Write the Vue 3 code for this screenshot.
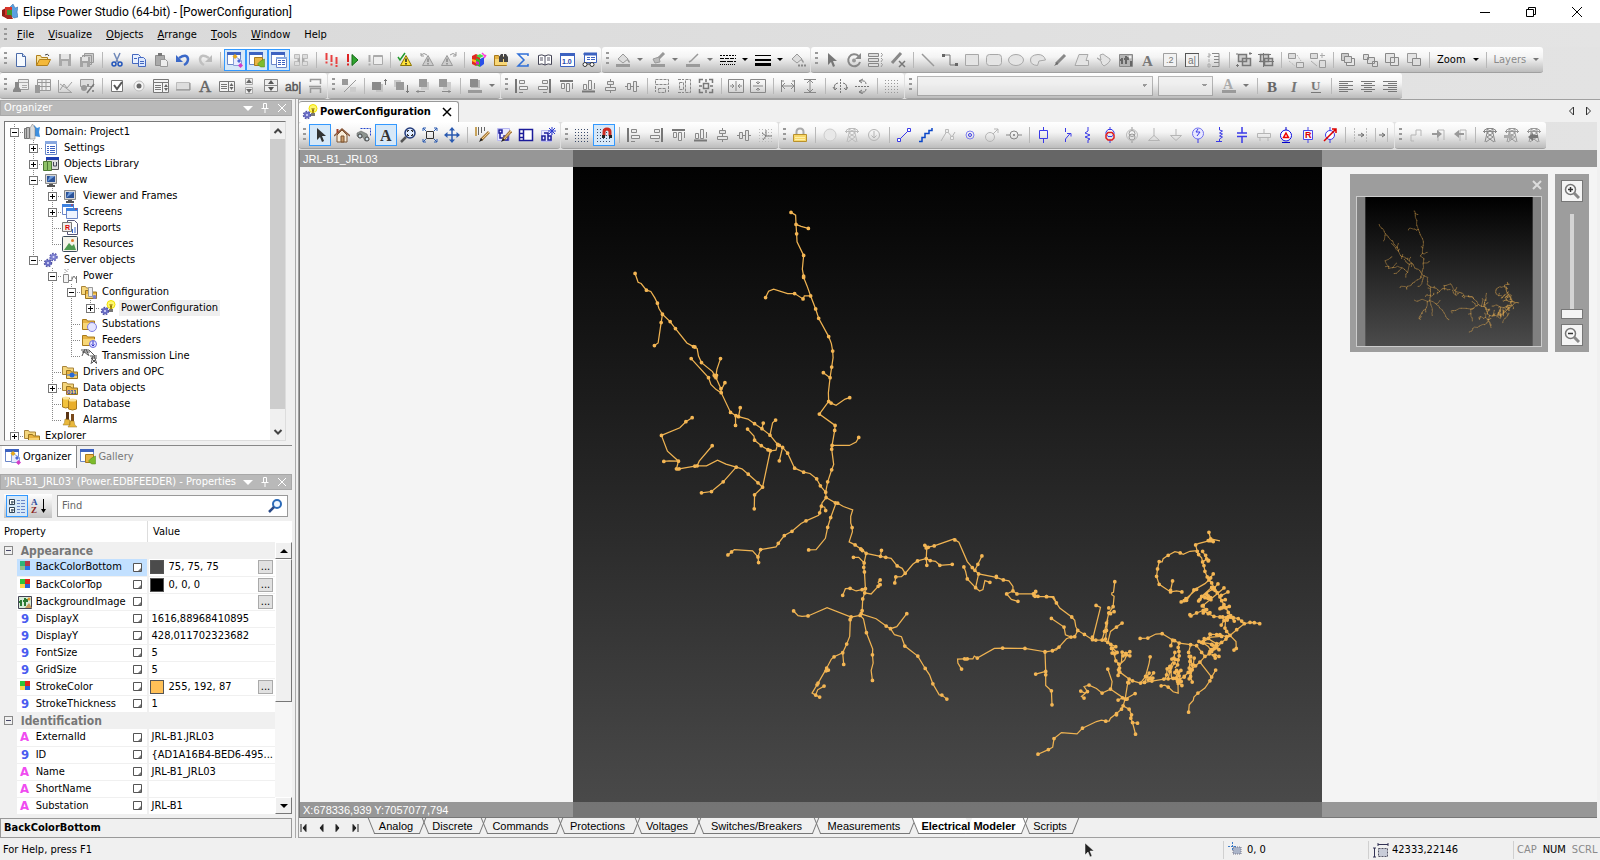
<script setup>
import { ref } from 'vue'

// 16x16 icon bodies, rendered inside <svg viewBox="0 0 16 16">
const G = 'stroke="#888" fill="none"'
const B = 'stroke="#3a3ae8" fill="none"'
const L = 'stroke="#b5b5b5" fill="none"'
const folder = '<path d="M1.500 13.500v-10h4l1 1.500h7v8.500z" fill="#e8b544" stroke="#a87a1c"/><path d="M2 7h12v6H2z" fill="#f8d777"/>'
const folders = '<path d="M.5 10.500v-8h4l1 1.500h6v6.500z" fill="#f5d67c" stroke="#a8843c"/><path d="M4.500 14.500v-8h4l1 1.500h6v6.500z" fill="#e9b23e" stroke="#9a7420"/><path d="M5 10h10v4H5z" fill="#f7d271"/>'
const win = '<path d="M.5.500h13v12H.5z" fill="#fff" stroke="#6a86c8"/><path d="M0 0h14v3H0z" fill="#3d62c0"/>'
const tower = (c) => `<path d="M2 3.500l3-2h6l3 2M1 4.500h14M2.500 3v3M13.500 3v3M5 2l6 4-6 4 7 5M11 2L5 6l6 4-7 5M5 2v4l-2 9M11 2v4l2 9" stroke="${c}" fill="none"/>`
const align = {
  left: '<path d="M2 1v14" stroke="#777" stroke-width="2"/><path d="M5.500 2.500h5v3h-5zM5.500 8.500h8v3h-8zM5 14.500h4" stroke="#888" fill="#eee"/>',
  right: '<path d="M14 1v14" stroke="#777" stroke-width="2"/><path d="M6.500 2.500h5v3h-5zM2.500 8.500h9v3h-9zM7 14.500h4" stroke="#888" fill="#eee"/>',
  top: '<path d="M2 3h13" stroke="#777" stroke-width="2"/><path d="M3.500 5.500h3v5h-3zM8.500 5.500h3v8h-3zM14.500 5v6" stroke="#888" fill="#eee"/>',
  bottom: '<path d="M2 13.500h13" stroke="#777" stroke-width="2"/><path d="M3.500 6.500h3v5h-3zM8.500 2.500h3v9h-3zM14.500 5v6" stroke="#888" fill="#eee"/>',
  centerh: '<path d="M8.500 1v14" stroke="#888"/><path d="M5.500 3.500h6v3h-6zM3.500 9.500h10v3h-10z" stroke="#888" fill="#e4e4e4"/>',
  centerv: '<path d="M1 8.500h14" stroke="#888"/><path d="M3.500 5.500h3v6h-3zM9.500 3.500h3v10h-3z" stroke="#888" fill="#e4e4e4"/>'
}
const dots = (c) => {
  let d = ''
  for (let y = 2; y < 16; y += 3) for (let x = 1; x < 16; x += 3) d += `M${x} ${y}.500h1`
  return `<path d="${d}" stroke="${c}"/>`
}
const gears = '<circle cx="10.500" cy="5" r="3" fill="#7c80cf" stroke="#5a5cb0" stroke-width="2.500" stroke-dasharray="1.500 1"/><circle cx="5" cy="11" r="3" fill="#7c80cf" stroke="#4f52a4" stroke-width="2.500" stroke-dasharray="1.500 1"/><circle cx="5" cy="11" r="3" fill="#6a6ec4"/><circle cx="10.500" cy="5" r="3" fill="#7c80cf"/><circle cx="5" cy="11" r="1" fill="#dfe0ff"/><circle cx="10.500" cy="5" r="1" fill="#dfe0ff"/>'
const warn = (f, s) => `<path d="M9 3.500l5.500 10h-11z" fill="${f}" stroke="${s}"/><path d="M9 6.500v3.500M9 11v1.500" stroke="${s === '#999' ? '#888' : '#222'}" stroke-width="1.500"/>`
const stack = (a, b) => `<path d="M1.500 1.500h7v7h-7z" fill="${a}" stroke="#888"/><path d="M6.500 6.500h8v7h-8z" fill="${b}" stroke="#888"/>`

const icons = {
  app: '<path d="M11 0l2 4 3-1-1 5 1 5-4 1-4-3V3z" fill="#5aa0e0" stroke="#2b62a0" stroke-width=".5"/><path d="M0 6l4-2v10l-4-2z" fill="#8c1d14"/><path d="M3 3h7v9H3z" fill="#d8362a"/><path d="M5 6h5v8H5z" fill="#3f9a32"/><path d="M1 11l4 4h6l-2-4z" fill="#a62a1e"/>',
  new: '<path d="M3.500 1.500h6l3 3v10h-9z" fill="#f6faff" stroke="#4a6aa8"/><path d="M9.500 1.500v3h3" fill="#cfe0f8" stroke="#4a6aa8"/>',
  open: '<path d="M1.500 13.500v-10h4l1 2h6v2" fill="#f8e29c" stroke="#b07f1c"/><path d="M1.500 13.500l3-6h11l-3 6z" fill="#f3b83a" stroke="#b07f1c"/><path d="M10 3q3-2 4 1" stroke="#444" fill="none"/>',
  save: '<path d="M2 2h12v12H2z" fill="#a9a9a9"/><path d="M4 2h8v5H4z" fill="#e6e6e6"/><path d="M5 9h6v5H5z" fill="#d0d0d0"/>',
  saveall: '<path d="M5.500 1.500h9v9h-9zM3.500 3.500h9v9h-9z" fill="#ccc" stroke="#999"/><path d="M1 5h10v10H1z" fill="#a4a4a4"/><path d="M3 5h6v4H3z" fill="#e4e4e4"/><path d="M4 11h4v4H4z" fill="#ccc"/>',
  cut: '<path d="M5 1l4 9M11 1L7 10" stroke="#6f88b8" stroke-width="1.500"/><circle cx="5" cy="12" r="2" fill="none" stroke="#2255bb" stroke-width="1.500"/><circle cx="11" cy="12" r="2" fill="none" stroke="#2255bb" stroke-width="1.500"/>',
  copy: '<path d="M1.500 2.500h6l2 2v7h-8z" fill="#e8f0ff" stroke="#4468c0"/><path d="M7.500 5.500h5l2 2v7h-7z" fill="#dce8ff" stroke="#4468c0"/><path d="M9 9.500h4M9 11.500h4M3 6.500h3" stroke="#4468c0"/>',
  paste: '<path d="M2.500 3.500h9v10h-9z" fill="#aaa" stroke="#8d8d8d"/><path d="M5 1h4v3H5z" fill="#777"/><path d="M7.500 7.500h5l2 2v5h-7z" fill="#eee" stroke="#999"/>',
  undo: '<path d="M4 6q8-5 9 1 0 4-4 6" fill="none" stroke="#3a68c8" stroke-width="2.500"/><path d="M1 3v7h7z" fill="#3a68c8"/>',
  redo: '<path d="M12 6Q4 1 3 7q0 4 4 6" fill="none" stroke="#c0c0c0" stroke-width="2.500"/><path d="M15 3v7H8z" fill="#bbb"/>',
  organizer: win + '<path d="M6.500 3.500v10h8v-5z" fill="#e8ecff" stroke="#8aa0d8"/><path d="M8 2l2.500 2.500L8 7 5.500 4.500z" fill="#e8a91c"/><path d="M12 7l2 2-2 2-2-2z" fill="#4a68d8"/><path d="M13.500 11l2.500 2.500-2.500 2.500-2.500-2.500z" fill="#d43cc8"/>',
  gallery: win + '<path d="M5.500 5.500h8v8h-8z" fill="#e8b544" stroke="#a87a1c"/><path d="M15.500 7v8h-4l-3-3 3-3z" fill="#7dbb2c" stroke="#4e8414" stroke-width=".5"/>',
  props: win + '<path d="M5.500 5.500h10v10h-10z" fill="#fff" stroke="#6a86c8"/><path d="M5 5h11v2H5z" fill="#88a8e0"/><path d="M7 8.500h3M11 8.500h3M7 10.500h3M11 10.500h3M7 12.500h3M11 12.500h3" stroke="#3d62c0"/>',
  swap: '<path d="M1.500 2.500h5v4h-5zM9.500 2.500h5v4h-5zM1.500 9.500h5v4h-5zM9.500 9.500h5v4h-5z" stroke="#bbb" fill="#ddd"/><path d="M7 5L4 8l3 3zM9 5l3 3-3 3z" fill="#aaa"/>',
  run: '<path d="M3.500 1v7M8.500 3v7M13.500 5v7" stroke="#e84040" stroke-width="2"/><path d="M3.500 9.500v2M8.500 11.500v2M13.500 13v2" stroke="#e84040" stroke-width="2"/>',
  play: '<path d="M3 2v8M3 11.500v2" stroke="#d22" stroke-width="2"/><path d="M7 2.500v11l6-5.500z" fill="#2fa52f" stroke="#156a15"/>',
  stop: '<path d="M2.500 3v7M2.500 11.500v2" stroke="#aaa" stroke-width="2"/><path d="M6.500 3.500h9v9h-9z" stroke="#aaa" fill="#eee"/><path d="M6 4.500h10" stroke="#aaa"/>',
  warn: '<path d="M1 5l2 3 5-7" stroke="#1f9a2a" stroke-width="1.500" fill="none"/>' + warn('#ffe23a', '#8a7400'),
  warnprev: '<path d="M2 3q3-3 6 0M2 1v3h3" stroke="#999" fill="none"/>' + warn('#ccc', '#999'),
  warnnext: '<path d="M9 3q3-3 6 0M15 0v4h-3" stroke="#999" fill="none"/><g transform="translate(-3 0)">' + warn('#ccc', '#999') + '</g>',
  cube: '<path d="M1 4l4-2 4 2v8l-4 2-4-2z" fill="#e02a20"/><path d="M5 6l4 2v7l-4-2z" fill="#2fb52f"/><path d="M9 7l4-2v7l-4 3z" fill="#2a50e8"/><path d="M1 7l4 1v3L1 9z" fill="#ffb81c"/><path d="M5 9l3 1v3l-3-1z" fill="#d81cc8"/><path d="M5 4l4-2 4 2-4 2z" fill="#48e048"/><path d="M11 1l3 3M13 6l2-3" stroke="#ff40d8" stroke-width="1.500"/>',
  find: folder + '<path d="M6 5l2-3h2v3h1V2h2l2 3v5h-4V7h-1v3H6z" fill="#444"/>',
  sigma: '<path d="M13 4V2H3l6 6-6 6h10v-2" fill="none" stroke="#2f6fd8" stroke-width="1.500"/>',
  book: '<path d="M8 4Q5 2 1.500 3.500v9Q5 11 8 13q3-2 6.500-.5v-9Q11 2 8 4z" fill="#fff" stroke="#445"/><path d="M8 4v9M3 6h3M3 8h3M10 6h3M10 8h3" stroke="#556"/>',
  number: '<path d="M1.500 1.500h14v13h-14z" fill="#fff" stroke="#3d62c0"/><path d="M1 1h15v3H1z" fill="#3d62c0"/><text x="3" y="12" font-size="7" font-weight="bold" font-family="Liberation Sans" fill="#2244aa">1.0</text>',
  report: '<path d="M3.500 1.500h12v9h-12z" fill="#fff" stroke="#3d62c0"/><path d="M3 1h13v2H3zM6 5.500h3M10 5.500h4M6 7.500h3M10 7.500h4" stroke="#3d62c0" fill="#3d62c0"/><circle cx="4" cy="12.500" r="2" fill="#fff" stroke="#333"/><circle cx="11" cy="12.500" r="2" fill="#fff" stroke="#333"/><path d="M6 12h3" stroke="#333"/>',
  fill: '<path d="M3 7l5-5 5 5-5 4z" fill="#ddd" stroke="#999"/><path d="M13 7q3 3 1 4l-2-3" fill="#999"/><path d="M1 12h14v3H1z" fill="#9a9a9a"/>',
  brush: '<path d="M14 1L8 7" stroke="#999" stroke-width="3"/><path d="M9 5L3 7l2 4 5-1z" fill="#bbb" stroke="#999"/><path d="M1 12h14v3H1z" fill="#9a9a9a"/>',
  pen: '<path d="M13 2L6 9l-2 1" stroke="#999" stroke-width="1.500" fill="none"/><path d="M1 12h14v3H1z" fill="#9a9a9a"/>',
  dashes: '<path d="M0 3.500h16" stroke="#000" stroke-dasharray="2 1"/><path d="M0 6.500h16" stroke="#000" stroke-dasharray="4 1"/><path d="M0 9.500h16" stroke="#000" stroke-dasharray="6 1"/><path d="M0 12.500h16" stroke="#000" stroke-dasharray="1 1"/>',
  weight: '<path d="M0 3.500h16" stroke="#000"/><path d="M0 8h16" stroke="#000" stroke-width="2"/><path d="M0 12.500h16" stroke="#000" stroke-width="3"/>',
  bucket: '<path d="M2 7l5-5 5 5-5 4z" fill="#ddd" stroke="#999"/><path d="M12 7q3 3 1 4l-2-3" fill="#999"/><path d="M8 13.500h2M11 13.500h2M14 13.500h2" stroke="#888" stroke-width="2"/>',
  select: '<path d="M4 1v12l3-3 2 5 2-1-2-5h4z" fill="#777"/>',
  rotate: '<path d="M12.500 4A6 6 0 1 0 14 10" fill="none" stroke="#888" stroke-width="2"/><path d="M15 1v6H9z" fill="#888"/><circle cx="8" cy="8.500" r="2" fill="#999"/>',
  list: '<path d="M.5 1.500h10v3H.5zM.5 6.500h10v3H.5zM.5 11.500h10v3H.5z" fill="#ddd" stroke="#888"/><path d="M13 1q3 1 0 4M13 6q3 1 0 4M13 11q3 1 0 4" stroke="#999" fill="none"/>',
  pencut: '<path d="M11 1L2 11" stroke="#888" stroke-width="3"/><path d="M9 9l6 6M15 9l-6 6" stroke="#777" stroke-width="1.500"/>',
  line: '<path d="M2 2l12 12" stroke="#999" stroke-width="1.500"/>',
  connector: '<path d="M2 3h6v10h6" fill="none" stroke="#777"/><path d="M0 2h3v3H0zM13 11h3v3h-3z" fill="#666"/>',
  rect: '<path d="M1.500 2.500h13v11h-13z" fill="#e4e4e4" stroke="#a8a8a8"/>',
  rrect: '<rect x=".5" y="2.500" width="15" height="11" rx="3" fill="#e4e4e4" stroke="#a8a8a8"/>',
  ellipse: '<ellipse cx="8" cy="8" rx="7.500" ry="5.500" fill="#e4e4e4" stroke="#a8a8a8"/>',
  chord: '<path d="M15.500 8Q14 2.500 8 2.500.5 3 .5 8t7 5.500L9 9z" fill="#e4e4e4" stroke="#a8a8a8"/>',
  pencil: '<path d="M13 3L4 12" stroke="#888" stroke-width="3"/><path d="M5 10l-3 4 4-2z" fill="#666"/>',
  poly: '<path d="M5 2.500h9l-2 6h2.500v5H1z" fill="#e4e4e4" stroke="#a8a8a8"/>',
  freeform: '<path d="M1 6l4 2-1-5 3-1 7 5q1 3-6 7-3-2-3-5z" fill="#e4e4e4" stroke="#a8a8a8"/>',
  image: '<path d="M1.500 2.500h13v12h-13z" fill="#b4b4b4" stroke="#888"/><path d="M4 12V6M2 8h3M8 12V4M6 7h4V5M13 14V9" stroke="#666" stroke-width="2"/><circle cx="12" cy="5" r="1.500" fill="#eee"/>',
  text: '<text x="2" y="14" font-size="15" font-weight="bold" font-family="Liberation Serif" fill="#777">A</text>',
  label: '<path d="M1.500 1.500h13v13h-13z" fill="#f2f2f2" stroke="#a0a0a0"/><text x="4" y="11" font-size="9" font-family="Liberation Sans" fill="#777">.2</text>',
  edit: '<path d="M1.500 1.500h13v13h-13z" fill="#f2f2f2" stroke="#888"/><path d="M1 1.500h14M1.500 1v14" stroke="#555"/><text x="4" y="12" font-size="10" font-family="Liberation Sans" fill="#777">a|</text>',
  ruler: '<path d="M6 1.500h7v13H6M8 4.500h5M8 7.500h5M8 10.500h5" stroke="#888" fill="none"/><path d="M2 2h2v2H2v1h2M3 7v3M2 12h2v3H2z" stroke="#aaa" fill="none"/>',
  group: '<path d="M2.500 2.500h8v7h-8zM6.500 6.500h8v7h-8z" stroke="#777" fill="#ccc" stroke-width="1.500"/><path d="M0 2h2M14 0v3M13 1.500h3M1.500 12v3M0 13.500h3" stroke="#777"/>',
  ungroup: '<path d="M2.500 2.500h8v7h-8zM6.500 6.500h8v7h-8z" stroke="#777" fill="#ccc" stroke-width="1.500"/><path d="M0 2.500h13M5.500 1v14M1 9.500h15" stroke="#777" fill="none"/>',
  arrowlink: '<path d="M.5 1.500h7v5h-7zM8.500 10.500h7v5h-7z" stroke="#999" fill="#ddd"/><path d="M9 3l4 6M1 9l6 5" stroke="#aaa" stroke-dasharray="1 1"/>',
  arrowadd: '<path d="M.5 1.500h7v5h-7zM9.500 8.500h6v7h-6z" stroke="#999" fill="#ddd"/><path d="M12 1v5M10 3.500h5M1 9l6 5" stroke="#aaa"/>',
  tofront: stack('#ccc', '#e6e6e6') + '<path d="M4.500 4.500h7v6h-7z" stroke="#888" fill="#ddd"/>',
  toback: '<path d="M1.500 2.500h5v5h-5zM10.500 9.500h5v5h-5zM5.500 5.500h7v6h-7z" stroke="#888" fill="#ddd"/>',
  forward: '<path d="M6.500 5.500h8v8h-8zM1.500 1.500h9v9h-9z" stroke="#888" fill="#e4e4e4"/>',
  backward: '<path d="M1.500 1.500h9v9h-9z" stroke="#999" fill="#e4e4e4"/><path d="M6.500 6.500h8v7h-8z" stroke="#888" fill="#ddd"/>',
  user: '<path d="M5.500 1.500h10v10h-10z" fill="#eee" stroke="#999"/><path d="M6 4.500h9M9 7.500h5M9 9.500h5" stroke="#aaa"/><path d="M2 4h4v5l2 3v2H0v-2l2-3z" fill="#888"/>',
  table: '<path d="M2.500 1.500h13v11h-13z" fill="#eee" stroke="#999"/><path d="M2 4.500h13M2 8.500h13M7 2v11M11 2v11" stroke="#999"/><path d="M0 7h5v8H0z" fill="#999"/>',
  chart: '<path d="M1.500 2v12.500H15M3 12l4-6 3 4 5-6M3 6l6 4 5 4" fill="none" stroke="#a0a0a0"/>',
  percent: '<path d="M1.500 1.500h13v7h-13z" fill="#ddd" stroke="#999"/><circle cx="5" cy="10" r="3" fill="#999"/><path d="M15 6L8 15M8 7h2M13 13h2" stroke="#777" stroke-width="1.500"/>',
  check: '<path d="M2.500 2.500h11v11h-11z" fill="#fff" stroke="#777"/><path d="M5 7l3 4 5-7" fill="none" stroke="#555" stroke-width="2"/>',
  radio: '<circle cx="8" cy="8" r="5" fill="#f4f4f4" stroke="#bbb"/><circle cx="8" cy="8" r="2.500" fill="#666"/>',
  combo: '<path d="M.5 1.500h15v3H.5zM.5 4.500h9v10h-9zM9.500 4.500h6v10h-6zM2 7.500h6M2 9.500h6M2 11.500h6" fill="#f4f4f4" stroke="#777"/><path d="M11 9l2-3 2 3zM11 10l2 3 2-3z" fill="#666"/>',
  button: '<path d="M1.500 4.500h13v7h-13z" fill="#ddd" stroke="#bbb"/><path d="M1 12h14V5" fill="none" stroke="#888"/>',
  bigA: '<text x="2" y="14" font-size="17" font-family="Liberation Serif" fill="#666" stroke="#666" stroke-width=".5">A</text>',
  listbox: '<path d="M.5 3.500h15v10H.5zM9.500 3v11M2 6.500h6M2 8.500h6M2 10.500h6" fill="#f4f4f4" stroke="#777"/><path d="M10.500 8l2-3 2 3zM10.500 9l2 3 2-3z" fill="#666"/>',
  spin: '<path d="M4.500.5h7v6h-7zM4.500 9.500h7v6h-7z" fill="#eee" stroke="#aaa"/><path d="M5 5l3-4 3 4zM5 11l3 4 3-4z" fill="#666"/>',
  updown: '<path d="M1.500 1.500h13v12h-13zM2 7.500h12" fill="#eee" stroke="#888"/><path d="M5 6l3-4 3 4zM5 9l3 4 3-4z" fill="#555"/>',
  abl: '<text x="0" y="13" font-size="12" font-family="Liberation Sans" fill="#555" stroke="#555" stroke-width=".4">ab|</text>',
  splith: '<path d="M3.500 4V1.500h10V6M2 8.500h12M3.500 15v-4.500h10V15" fill="none" stroke="#999" stroke-width="1.500"/>',
  nolink: '<path d="M1 1h6v6H1z" fill="#999"/><path d="M9 9h6v5H9z" fill="#ccc"/><path d="M15 2L3 14" stroke="#999"/>',
  bring: '<path d="M5 6h7v8H5z" fill="#c4c4c4"/><path d="M1 4h9v8H1z" fill="#8a8a8a"/><path d="M14.500 1v6M13 2.500h3" stroke="#777"/>',
  send: '<path d="M1 2h7v7H1z" fill="#ccc"/><path d="M3 4h8v8H3z" fill="#999"/><path d="M14.500 7v8M13 13.500h3" stroke="#777"/>',
  goback: '<path d="M6 4h8v8H6z" fill="#ccc"/><path d="M4 1h8v8H4z" fill="#999"/><path d="M1 13.500h9M3 12v3" stroke="#888"/>',
  gofwd: '<path d="M6 4h8v8H6z" fill="#ccc"/><path d="M2 1h8v8H2z" fill="#999"/><path d="M5 13.500h9M12 12v3" stroke="#888"/>',
  shade: '<path d="M4 2h9v8H4z" fill="#bbb"/><path d="M3 1h8v8H3z" fill="#8c8c8c"/><path d="M1 12h14v3H1z" fill="#9a9a9a"/>',
  al: align.left, ar: align.right, at: align.top, ab: align.bottom, ach: align.centerh, acv: align.centerv,
  samew: `<path d="M1.500 1.500h13v5h-13zM4.500 10.500h7v4h-7zM1.500 8v6M14.500 8v6" ${G} stroke-dasharray="3 1"/>`,
  sameh: `<path d="M9.500 1.500h5v13h-5zM3.500 4.500h4v7h-4zM2 1.500h6M2 14.500h6" ${G} stroke-dasharray="3 1"/>`,
  samesize: '<path d="M1.500 5v-3.500H5M11 1.500h3.500V5M14.500 11v3.500H11M5 14.500H1.500V11M5.500 5.500h5v5h-5zM8 1v3M8 12v3M1 8h3M12 8h3" stroke="#777" fill="none" stroke-width="1.500"/>',
  hcenter: `<path d="M.5 1.500h15v13H.5zM8 3v10M2 8h4M14 8h-4M4 6l2 2-2 2M12 6l-2 2 2 2" ${G}/>`,
  vcenter: `<path d="M.5 1.500h15v13H.5zM3 8h10M8 3v3M8 13v-3M6 4l2 2 2-2M6 12l2-2 2 2" ${G}/>`,
  spaceh: `<path d="M1.500 2v12M14.500 2v12M2 8h12M5 5L2 8l3 3M11 5l3 3-3 3M1 3h3M12 3h3" ${G}/>`,
  spacev: `<path d="M2 1.500h12M2 14.500h12M8 2v12M5 5l3-3 3 3M5 11l3 3 3-3" ${G}/>`,
  fliph: '<path d="M8.500 1v15" stroke="#777" stroke-dasharray="2 1"/><path d="M3 11q-2-5 3-6M14 11q2-5-3-6M1 9l2 3 2-2M16 9l-2 3-2-2" fill="none" stroke="#777"/>',
  flipv: '<path d="M1 8.500h15" stroke="#777" stroke-dasharray="2 1"/><path d="M6 3q6-1 6 3M6 14q6 1 6-3M9 1L5 3l3 2M9 16l-4-2 3-2" fill="none" stroke="#777"/>',
  grid: dots('#999'),
  fontcolor: '<text x="2" y="11" font-size="14" font-family="Liberation Serif" font-weight="bold" fill="#aaa">A</text><path d="M1 12h14v3H1z" fill="#9a9a9a"/>',
  bold: '<text x="3" y="14" font-size="15" font-weight="bold" font-family="Liberation Serif" fill="#666">B</text>',
  italic: '<text x="5" y="14" font-size="15" font-style="italic" font-weight="bold" font-family="Liberation Serif" fill="#777">I</text>',
  underline: '<text x="3" y="12" font-size="13" font-weight="bold" font-family="Liberation Serif" fill="#777">U</text><path d="M3 14.500h10" stroke="#777"/>',
  tleft: '<path d="M1 3.500h14M1 5.500h9M1 7.500h14M1 9.500h9M1 11.500h14M1 13.500h9" stroke="#777"/>',
  tcenter: '<path d="M1 3.500h14M4 5.500h8M1 7.500h14M4 9.500h8M1 11.500h14M4 13.500h8" stroke="#777"/>',
  tright: '<path d="M1 3.500h14M6 5.500h9M1 7.500h14M6 9.500h9M1 11.500h14M6 13.500h9" stroke="#777"/>',
  cursor: '<path d="M5 1v12l3-3 2 5 2-1-2-5h4z" fill="#333"/>',
  home: '<path d="M3 8v7h10V8L8 3z" fill="#f8ecd8" stroke="#7a5230"/><path d="M0 9l8-7 8 7" fill="none" stroke="#8a5a3c" stroke-width="1.500"/><path d="M7 9h3v6H7z" fill="#c89a68" stroke="#7a5230"/><path d="M3.500 2v4" stroke="#a04028" stroke-width="2"/>',
  binoc: '<path d="M4.500 1.500h10v8" stroke="#2244cc" fill="none" stroke-dasharray="2 1"/><path d="M1 6l4-2 6 3 2 6-4 1-2-4-3 1-3-2z" fill="#8c9490" stroke="#555" stroke-width=".5"/><circle cx="11" cy="12" r="2" fill="#cfe0e8" stroke="#444"/><circle cx="4" cy="9" r="2" fill="#cfe0e8" stroke="#444"/>',
  textA: '<text x="2" y="14" font-size="16" font-weight="bold" font-family="Liberation Serif" fill="#333">A</text>',
  zoomwin: '<path d="M6 10l-5 5" stroke="#555" stroke-width="2.500"/><circle cx="10" cy="6" r="5" fill="#e0ecff" stroke="#223a7a" stroke-width="1.500"/><path d="M7.500 5v-1.500H9M11 3.500h1.500V5M12.500 7v1.500H11M9 8.500H7.500V7" fill="none" stroke="#222"/>',
  fit: '<path d="M4.500 4.500h7v7h-7z" fill="none" stroke="#333"/><path d="M1 1l3 3M15 1l-3 3M1 15l3-3M15 15l-3-3M1 4V1h3M12 1h3v3M1 12v3h3M12 15h3v-3" stroke="#2a5ab0" fill="none"/>',
  pan: '<path d="M8 1v14M1 8h14" stroke="#2a5ab0" stroke-width="1.500"/><path d="M8 0l3 3.500H5zM8 16l3-3.500H5zM0 8l3.500-3v6zM16 8l-3.500-3v6z" fill="#2a5ab0"/>',
  barpen: '<path d="M2 0v9" stroke="#c8a45c" stroke-width="2"/><path d="M4.500 0v8M7.500 0v6M10.500 0v4" stroke="#666"/><path d="M15 5l-8 8" stroke="#a87a3c" stroke-width="3"/><path d="M15 5l-8 8" stroke="#f0d08c"/><path d="M7 11l-2 4 4-2z" fill="#222"/>',
  nodepen: '<path d="M1.500 1.500h12v12h-12z" fill="#e8e8ff" stroke="#b8b8f0"/><path d="M3 3h3v3H3zM8 9h4v4H8zM4 6v5h4" fill="none" stroke="#1c1c9a" stroke-width="1.500"/><path d="M15 4l-8 9" stroke="#a87a3c" stroke-width="3"/><path d="M15 4l-8 9" stroke="#f0d08c"/><path d="M7 11l-2 4 4-2z" fill="#222"/>',
  layout: '<path d="M1.500 2.500h13v11h-13zM5.500 2v11M1 6.500h4M1 10.500h4" fill="#fff" stroke="#1c1c9a" stroke-width="1.500"/>',
  nodestar: '<path d="M1.500 3.500h10v11h-10z" fill="#e8e8ff" stroke="#b8b8f0"/><path d="M2 9h3v4H2zM8 9h3v4H8zM4 6h4v3" fill="none" stroke="#1c1c9a" stroke-width="1.500"/><path d="M12 0v8M8 4h8M9 1l6 6M15 1L9 7" stroke="#2a3ad0"/>',
  snapgrid: dots('#3a4a6a'),
  magnet: dots('#3a4a6a') + '<path d="M8 9V5q0-3 3-3t3 3v4" stroke="#cc2a20" stroke-width="3" fill="none"/><path d="M6 8h3v3H6zM13 8h3v3h-3z" fill="#222"/>',
  snap: dots('#bbb') + '<path d="M8 3v6h6M4 6l4 3-3 4" stroke="#777" fill="none"/>',
  lock: '<path d="M4.500 8V5q0-3.500 3.500-3.500T11.500 5v3" stroke="#aaa" stroke-width="2" fill="none"/><path d="M1.500 7.500h13v7h-13z" fill="#f8d86a" stroke="#b8902c"/><path d="M3 10.500h10M3 12.500h10" stroke="#fff0a8"/>',
  circ: '<circle cx="8" cy="8" r="6" fill="#e8e8e8" stroke="#ccc"/>',
  tower: tower('#bbb'),
  towerdark: tower('#888'),
  circdown: `<circle cx="8" cy="8" r="5.500" ${L}/><path d="M8 4v7M5.500 8.500L8 11l2.500-2.500" ${L}/>`,
  seg: `<path d="M4 12l8-8" ${B}/><path d="M1.500 11.500h3v3h-3zM11.500 1.500h3v3h-3z" fill="#fff" stroke="#3a3ae8"/>`,
  steps: '<path d="M1 14.500h3v-4h3v-4h4v-3h3V1" fill="none" stroke="#0a46c8" stroke-width="1.500"/>',
  zig: `<path d="M1 14l6-10 5 6 3-5" ${L}/><path d="M5.500 2.500h3v3h-3zM10.500 9.500h3v3h-3z" fill="#eee" stroke="#bbb"/>`,
  target: '<circle cx="8" cy="8" r="4" fill="none" stroke="#8080ee"/><circle cx="8" cy="8" r="1.500" fill="none" stroke="#3a3ae8"/>',
  male: `<circle cx="6" cy="10" r="4.500" ${L}/><path d="M9 7l5-5M10 2h4v4" ${L}/>`,
  sw: '<circle cx="8" cy="8" r="4" fill="none" stroke="#888"/><circle cx="8" cy="8" r="1" fill="#777"/><path d="M0 8h4M12 8h4" stroke="#888"/>',
  breaker: `<path d="M7.500 0v3M7.500 12v4M3.500 3.500h8v8h-8z" ${B}/>`,
  knife: `<path d="M7.500 1v4M7.500 15v-3l5-6M9 6.500h4v3" ${B}/>`,
  fuse: `<path d="M8 0v4l-3 2 5 2-5 2 5 2-2 1v3" ${B}/>`,
  xfmr: '<path d="M8 0v3M8 13v3" stroke="#3a3ae8"/><path d="M6 2.500h4l2 2.500v2l-2 2.500H6L4 7V5z" fill="none" stroke="#3a3ae8"/><path d="M6 5.500h4l2 2.500v3l-2 2H6l-2-2V8z" fill="none" stroke="#e01c1c" stroke-width="1.500"/>',
  xfmr2: '<path d="M8 0v3M8 13v3" stroke="#999"/><circle cx="8" cy="6.500" r="3" fill="none" stroke="#999"/><circle cx="8" cy="10" r="3" fill="none" stroke="#999"/><circle cx="8" cy="8" r="5.500" fill="none" stroke="#bbb"/>',
  up: `<path d="M8 1v8M2.500 13.500L8 8.500l5.500 5z" ${L}/>`,
  down: `<path d="M8 2v6M2.500 8.500h11L8 13.500z" ${L}/>`,
  gen: '<circle cx="8" cy="6.500" r="5.500" fill="#e8e8ff" stroke="#7070ee"/><path d="M8 12v4M8 2l-2 3h4l-3 4" stroke="#3a3ae8" fill="none"/>',
  reactor: `<path d="M7.500 0v3l3 1-3 2 3 1-3 2 3 1-3 2v2M4 14.500h6" ${B}/>`,
  cap: '<path d="M8 0v5.500M3 6h10M3 9.500h10M8 10v6" fill="none" stroke="#3a3ae8" stroke-width="1.500"/>',
  bus: `<path d="M1.500 6.500h13v4h-13zM8 2v4M4 11v3M12 11v3" ${L}/>`,
  delta: '<circle cx="8" cy="8.500" r="5.500" fill="#fff" stroke="#0a0ae0"/><path d="M8 0v3M4 15.500h8" stroke="#00c"/><path d="M8 6l2.500 4.500h-5z" fill="#fdd" stroke="#e00" stroke-width="1.500"/>',
  reg: '<path d="M8 0v3M8 13v3M3.500 3.500h9v9h-9z" fill="#f4f4ff" stroke="#4a4ae8"/><text x="5" y="11" font-size="9" font-weight="bold" font-family="Liberation Sans" fill="#d00">R</text>',
  vari: '<circle cx="8" cy="8" r="4.500" fill="#fff" stroke="#3a3ae8"/><path d="M8 0v3M8 13v3" stroke="#3a3ae8"/><path d="M2 14L14 2M10 2h4v4" fill="none" stroke="#d00" stroke-width="1.500"/>',
  outp: '<path d="M2.500 1v14M14.500 1v14" stroke="#bbb" stroke-dasharray="2 1"/><path d="M6 8h5M9 6l3 2-3 2" stroke="#666" fill="none"/>',
  inp: '<path d="M1.500 1v14M13.500 1v14" stroke="#bbb"/><path d="M5 8h5M8 6l3 2-3 2" stroke="#666" fill="none"/>',
  link0: `<path d="M3 14V8h5V3h5v6M3 14h3" ${L}/>`,
  link1: `<path d="M8 14V3h6v10" ${L}/><path d="M2 6h5V3l5 4-5 4V8H2z" fill="#999"/>`,
  link2: `<path d="M8 14V3h6v10" ${L}/><path d="M12 6H7V3L2 7l5 4V8h5z" fill="#999"/>`,
  towerin: tower('#999') + '<path d="M0 8h5V6l4 4-4 4v-3H0z" fill="#aaa"/>',
  towerout: tower('#999') + '<path d="M12 8H7V6l-5 4 5 4v-3h5z" fill="#777"/>',
  // tree
  domain: '<path d="M10 1l3 3 3-1-1 5 1 5-6-1z" fill="#3d8fe0"/><path d="M.5 4.500h2v10h-2zM2.500 3.500h3v11h-3z" fill="#bbb" stroke="#777"/><path d="M6 4l2.500-4L11 4v11H6z" fill="#ddd" stroke="#777" stroke-width=".5"/>',
  settings: '<path d="M2.500 1.500h11v13h-11z" fill="#fff" stroke="#6a8ac8"/><path d="M2 1h12v3H2z" fill="#88a8e0"/><path d="M4 6.500h2M7 6.500h5M4 8.500h2M7 8.500h5M4 10.500h2M7 10.500h5M4 12.500h2M7 12.500h5" stroke="#3d62c0"/>',
  library: '<path d="M3.500 1.500h12v12h-12z" fill="#ddd" stroke="#555"/><path d="M3 1h13v3H3z" fill="#1f3fb0"/><path d="M.5 5.500h4v9h-4zM4.500 5.500h4v9h-4z" fill="#8fc268" stroke="#4e7a34"/><path d="M10.500 6v4h3V6" stroke="#445" fill="none"/>',
  monitor: '<path d="M2.500 2.500h11v9h-11z" fill="#d8d8d8" stroke="#888"/><path d="M4 4h8v6H4z" fill="#2a5298"/><path d="M4 10l8-6H7z" fill="#6f9ad8"/><path d="M6 12h4v1h2v2H4v-2h2z" fill="#555"/>',
  screens: '<path d="M.5.500h11v10H.5z" fill="#fff" stroke="#6a86c8"/><path d="M0 0h12v3H0z" fill="#3d82e0"/><path d="M4.500 4.500h11v10h-11z" fill="#eef4ff" stroke="#6a86c8"/><path d="M4 4h12v3H4z" fill="#3d82e0"/><path d="M9 1h2M13 5h2" stroke="#d22"/>',
  reports: '<path d="M5.500.500h7l3 3v11h-10z" fill="#fff" stroke="#557"/><path d="M.5 2.500h9v9h-9z" fill="#eee" stroke="#777"/><text x="3" y="10" font-size="7" font-weight="bold" font-family="Liberation Sans" fill="#d00">R</text><path d="M10.500 13V9M13 13V7" stroke="#36c"/>',
  resources: '<rect x=".5" y=".5" width="15" height="15" rx="1" fill="#f4f4ea" stroke="#3a4a5a"/><path d="M2 14l5-7 3 3 2-2 2 6z" fill="#4e9a50"/><circle cx="10.500" cy="4.500" r="1.500" fill="#e07a2a"/>',
  gears,
  plant: '<path d="M1.500 14.500v-8h5v8z" fill="#f4f4f4" stroke="#888"/><path d="M3 1v1M5 3v1M3 4v1M6 1v1M4 2v1" stroke="#999"/><path d="M7 12.500h3v-4M10 11l2-3 2 3M14.500 8v7" stroke="#777" fill="none"/>',
  configfolder: folders + '<path d="M7.500 3.500h4v9h-4z" fill="#eee" stroke="#999"/><circle cx="13.500" cy="13" r="2" fill="#7c80cf"/>',
  powerconf: '<circle cx="5" cy="11" r="3" fill="#6a6ec4" stroke="#4f52a4" stroke-width="2.500" stroke-dasharray="1.500 1"/><circle cx="5" cy="11" r="3" fill="#6a6ec4"/><circle cx="5" cy="11" r="1" fill="#dfe0ff"/><circle cx="11" cy="4.500" r="4" fill="#fff870" stroke="#f0e000"/><path d="M10 4l1 5 1-5" stroke="#997a00" fill="none"/><path d="M9 9h4v3H9z" fill="#777"/>',
  subfolder: folder + '<circle cx="11" cy="11" r="4.500" fill="#e4e4ff" stroke="#8080e0"/>',
  feedfolder: folder + '<circle cx="12" cy="12" r="3.500" fill="#e4e4ff" stroke="#6a6ae0"/><path d="M12 9v5M10.500 12.500L12 14l1.500-1.500" stroke="#33c" fill="none"/>',
  line2: '<path d="M0 2h8M1 4h8M4 1L1 8M5 1l3 7M2 3l5 4M9 8h7M10 10h6M12 8l-2 8M13 8l3 8M10 10l5 5M15 11l-4 4M8 2l6 6" stroke="#555" fill="none"/>',
  driver: folders + '<circle cx="10" cy="11" r="2.500" fill="#2a6ad8"/><path d="M5 11h10" stroke="#2a6ad8"/>',
  data: folders + '<text x="5" y="14" font-size="6" font-weight="bold" font-family="Liberation Sans" fill="#1a3aa8">011</text>',
  database: '<path d="M.5 2v9q3 2 7 0V2z" fill="#f2c23c" stroke="#a87a1c"/><ellipse cx="4" cy="2" rx="3.500" ry="1.500" fill="#fbe398"/><path d="M6.500 4v9q4 2 8 0V4z" fill="#e9ae2a" stroke="#a87a1c"/><ellipse cx="10.500" cy="4" rx="4" ry="1.500" fill="#fbe398"/>',
  alarms: '<path d="M4 0h3v8H4z" fill="#5a3414"/><path d="M9 2h3v8H9z" fill="#7a4a1c"/><path d="M1 13q2-2 2-6l5 1v5zM6 15q2-2 2-6h4q0 4 3 6z" fill="#e9b83c" stroke="#9a7420" stroke-width=".5"/>',
  folders,
  // property types
  color: '<path d="M3 2h5v5H3z" fill="#2fc43a"/><path d="M8 2h5v5H8z" fill="#e0241c"/><path d="M3 7h5v4H3z" fill="#ffd84a"/><path d="M8 7h5v4H8z" fill="#2a62d8"/>',
  colorsel: '<path d="M3 2h5v5H3z" fill="#2fb47a"/><path d="M8 2h5v5H8z" fill="#b03a4a"/><path d="M3 7h5v4H3z" fill="#8fc08a"/><path d="M8 7h5v4H8z" fill="#2a72e8"/>',
  picture: '<path d="M1.500 2.500h13v12h-13z" fill="#d8ecd8" stroke="#445"/><path d="M4 12V6M2 8h3M8 12V4M6 7h4V5" stroke="#2c7a34" stroke-width="2"/><circle cx="12" cy="5" r="1.500" fill="#e0922a"/><path d="M8 14l4-5 3 5z" fill="#c89a5a"/>',
  num: '<text x="4" y="12" font-size="13" font-weight="bold" font-family="DejaVu Sans Condensed" fill="#4a5cf0">9</text>',
  str: '<text x="3" y="12" font-size="13" font-weight="bold" font-family="DejaVu Sans Condensed" fill="#f04cf0">A</text>',
  categorized: '<path d="M.5 1.500h5v5h-5zM.5 9.500h5v5h-5zM2 4h3M3 3v3M2 12h3M3 11v3" fill="#fff" stroke="#345"/><path d="M8 2.500h3M8 5.500h3M12 2.500h4M12 5.500h4M8 8.500h3M12 8.500h4M8 11.500h3M12 11.500h4M8 14.500h3M12 14.500h4" stroke="#6a86c8"/>',
  sortaz: '<text x="0" y="7" font-size="9" font-weight="bold" font-family="Liberation Serif" fill="#2a4a9a">A</text><text x="0" y="15" font-size="9" font-weight="bold" font-family="Liberation Serif" fill="#8a1c1c">Z</text><path d="M12.500 1v12" stroke="#000"/><path d="M10 11h5l-2.500 4z" fill="#000"/>',
  search: '<circle cx="10" cy="6" r="4" fill="#eef6ff" stroke="#2a6ab8" stroke-width="2"/><path d="M7 9l-5 5" stroke="#2a4a88" stroke-width="2.500"/>',
  zoomin: '<circle cx="6.500" cy="6.500" r="5" fill="#f8f8f8" stroke="#777" stroke-width="1.500"/><path d="M4 6.500h5M6.500 4v5" stroke="#333" stroke-width="1.500"/><path d="M10 10l5 5" stroke="#888" stroke-width="3"/>',
  zoomout: '<circle cx="6.500" cy="6.500" r="5" fill="#f8f8f8" stroke="#777" stroke-width="1.500"/><path d="M4 6.500h5" stroke="#333" stroke-width="1.500"/><path d="M10 10l5 5" stroke="#888" stroke-width="3"/>',
  pos: '<path d="M5 5h8v7H5z" fill="#aab4c8" stroke="#778" stroke-dasharray="1 1"/><path d="M0 4.500h9M4.500 0v9" stroke="#3a7ac8" stroke-dasharray="2 1"/>',
  size: '<path d="M5.500 6.500h9v8h-9z" fill="#c8ccd8" stroke="#556" stroke-dasharray="2 1"/><path d="M5 2.500h10M5 1v3M15 1v3M1.500 6v9M0 6h3M0 15h3" stroke="#335" fill="none"/>'
}

// "|" is a separator, "*" marks a pressed button, "^" adds a drop-down arrow
const parseBar = (text) => text.split(' ').map((t) => ({
  sep: t === '|',
  on: t[0] === '*',
  drop: t.endsWith('^'),
  icon: t.replace(/[*^]/g, '')
}))

const topBars = [
  'new open save saveall | cut copy paste undo redo | *organizer *gallery *props swap | run play stop | warn warnprev warnnext | cube find sigma book number report',
  'fill^ brush^ pen^ dashes^ weight^ bucket',
  'select rotate list pencut | line connector rect rrect ellipse chord pencil poly freeform image text label edit ruler | group ungroup | arrowlink arrowadd | tofront toback forward backward |'
].map(parseBar)

const formatBars = [
  'user table chart percent | check radio combo button bigA listbox spin updown abl splith',
  'nolink | bring send goback gofwd | shade^',
  'al ar at ab ach acv | samew sameh samesize | hcenter vcenter | spaceh spacev | fliph flipv | grid'
].map(parseBar)
const fontBar = parseBar('fontcolor^ | bold italic underline | tleft tcenter tright')

const editorBars = [
  '*cursor home binoc *textA zoomwin fit pan | barpen nodepen layout nodestar',
  'snapgrid *magnet | al ar at ab ach acv snap',
  'lock | circ tower circdown | seg steps zig target male sw | breaker knife fuse xfmr xfmr2 up down gen reactor cap bus delta reg vari | outp inp',
  'link0 link1 link2 | towerdark towerin towerout'
].map(parseBar)

const menus = ['File', 'Visualize', 'Objects', 'Arrange', 'Tools', 'Window', 'Help']

const treeRows = [
  [0, '-', 'domain', 'Domain: Project1'],
  [1, '+', 'settings', 'Settings'],
  [1, '+', 'library', 'Objects Library'],
  [1, '-', 'monitor', 'View'],
  [2, '+', 'monitor', 'Viewer and Frames'],
  [2, '+', 'screens', 'Screens'],
  [2, '', 'reports', 'Reports'],
  [2, '', 'resources', 'Resources'],
  [1, '-', 'gears', 'Server objects'],
  [2, '-', 'plant', 'Power'],
  [3, '-', 'configfolder', 'Configuration'],
  [4, '+', 'powerconf', 'PowerConfiguration'],
  [3, '', 'subfolder', 'Substations'],
  [3, '', 'feedfolder', 'Feeders'],
  [3, '', 'line2', 'Transmission Line'],
  [2, '', 'driver', 'Drivers and OPC'],
  [2, '+', 'data', 'Data objects'],
  [2, '', 'database', 'Database'],
  [2, '', 'alarms', 'Alarms'],
  [0, '+', 'folders', 'Explorer']
]

const continues = (i, level) => {
  const next = treeRows.slice(i + 1).find((r) => r[0] <= level)
  return !!next && next[0] === level
}

const tree = treeRows.map(([depth, box, icon, label], i) => ({
  box,
  icon,
  label,
  guides: Array.from({ length: depth }, (_, k) => continues(i, k)),
  up: i > 0,
  down: continues(i, depth)
}))
const selectedNode = ref('PowerConfiguration')

const groups = [
  {
    name: 'Appearance',
    rows: [
      { icon: 'colorsel', name: 'BackColorBottom', value: '75, 75, 75', swatch: 'rgb(75, 75, 75)', more: true },
      { icon: 'color', name: 'BackColorTop', value: '0, 0, 0', swatch: 'rgb(0, 0, 0)', more: true },
      { icon: 'picture', name: 'BackgroundImage', value: '', more: true },
      { icon: 'num', name: 'DisplayX', value: '1616,88968410895' },
      { icon: 'num', name: 'DisplayY', value: '428,011702323682' },
      { icon: 'num', name: 'FontSize', value: '5' },
      { icon: 'num', name: 'GridSize', value: '5' },
      { icon: 'color', name: 'StrokeColor', value: '255, 192, 87', swatch: 'rgb(255, 192, 87)', more: true },
      { icon: 'num', name: 'StrokeThickness', value: '1' }
    ]
  },
  {
    name: 'Identification',
    rows: [
      { icon: 'str', name: 'ExternalId', value: 'JRL-B1.JRL03' },
      { icon: 'num', name: 'ID', value: '{AD1A16B4-BED6-495...' },
      { icon: 'str', name: 'Name', value: 'JRL-B1_JRL03' },
      { icon: 'str', name: 'ShortName', value: '' },
      { icon: 'str', name: 'Substation', value: 'JRL-B1' }
    ]
  }
]
const selectedProp = ref('BackColorBottom')

const sheets = [
  ['Analog', 54], ['Discrete', 59], ['Commands', 77], ['Protections', 77], ['Voltages', 62],
  ['Switches/Breakers', 117], ['Measurements', 98], ['Electrical Modeler', 111], ['Scripts', 52]
]
const activeSheet = ref('Electrical Modeler')
const zoom = ref(0)

// Feeder geometry, in thirds of a unit from each section's origin.
// "*" after a point puts a node on it, ";" starts the next branch.
const sections = [
  {
    x: 620,
    y: 190,
    d: `48,253* 57,279 66,283 82,303* 95,307 107,326 115,342* 119,357 130,375* 153,397* 169,418* 203,461 223,472* 227,473* 234,478 238,500 247,520* 280,547 288,562* 291,567 305,598* 306,610* 334,669* 350,679* 358,682* 386,689 406,703* 428,718* 452,737* 475,765* 490,774* 505,791* 526,836* 553,848* 572,852 592,868* 603,889* 619,908* 620,924*;
130,375 126,400* 117,461 106,469*; 216,508* 268,565* 275,585 290,600 305,610; 285,558* 292,558*; 290,565*; 290,560 293,540 304,508*; 306,602 317,580*;
349,680 349,708*; 358,682 363,655*; 428,718 432,701*; 452,737 460,700 469,692*;
475,765 470,782 453,784* 446,781* 426,769* 406,752* 404,740 385,719*; 453,784 430,893* 406,916* 405,958*; 480,768*; 490,774 480,814*;
430,893 416,880* 387,854* 368,838 351,833* 320,824 295,812 262,829 234,829* 227,830* 180,838* 172,838* 178,815* 170,808 145,785 127,738* 182,715 200,697* 219,685*;
178,815 150,814 134,816*; 234,829 240,815 279,769*; 351,833 312,877* 277,906* 247,910*;
515,70* 529,78 530,106* 532,134* 533,158 553,199* 549,240 553,261* 553,265* 563,290 574,320* 589,359* 598,387* 628,442* 636,463 640,485* 641,505 637,533* 632,565* 627,610 628,636* 600,674* 647,708* 646,723* 638,768* 637,779* 643,825 637,841* 625,877* 619,908;
530,106 545,112 567,118*; 574,320 555,320 551,329* 526,313* 505,313 463,300 448,306 439,325*; 632,565 612,550*; 628,636 635,641* 650,648 677,629 691,625*; 638,768 690,768 710,758 718,744*;
620,924 608,940 606,950* 601,970* 598,977 560,994* 545,1002 518,1025* 495,1038* 477,1061* 470,1072 424,1080* 416,1102* 400,1084 345,1080 337,1087* 326,1096*; 416,1102 418,1119*; 606,950 616,953 619,963*;
620,924 648,940* 655,941* 672,951 700,961 694,980 694,1000 698,1014* 699,1026 689,1057 707,1066* 726,1080* 740,1091*; 650,940 634,984* 625,1013* 618,1046 590,1080 568,1081*`
  },
  {
    x: 700,
    y: 480,
    d: `484,208*; 489,213*; 500,221* 543,230* 559,233* 575,236 593,259* 608,266 617,281* 640,254 654,244* 680,237* 682,203* 704,199* 764,178 766,181* 778,188 803,246 818,264* 837,283* 890,293* 911,301* 928,304 940,320 940,334* 952,343* 1001,343* 1015,351 1041,351* 1062,351 1070,370* 1080,385;
543,230 546,212*; 617,281 606,291 589,292* 586,310*; 682,203 676,197*; 686,203*; 680,205*; 680,237 682,257*; 680,237 692,243* 708,245 721,257* 758,254*; 826,272* 835,254* 847,229*; 890,290*;
837,283 828,324* 803,298* 798,275 793,262*; 828,324 840,334 850,330 856,303 871,308*; 940,334 921,343* 935,359 955,365*; 1003,347* 1008,335*;
500,221 494,250* 493,263* 495,277* 498,327* 496,340* 490,358* 488,393* 485,402* 482,407*; 494,250 478,233 462,233*; 488,330* 498,327; 488,330 470,334 452,326* 438,327 430,347*; 496,340 515,343 536,320* 542,315* 536,308 542,301*;
482,407 455,412* 383,384 326,409* 308,410 296,408 283,394*; 452,420*; 453,413 451,470 442,493* 430,519* 404,531* 396,538 382,565* 387,571* 380,573*; 382,565 356,610* 353,615* 338,640 349,646* 361,652*; 430,519 433,554*; 349,646 355,630 374,619*;
482,407 492,417 501,459* 520,508 519,525* 521,550 515,572 519,602*; 482,402 530,417 560,439* 573,447* 592,441 622,402*; 573,447 585,465 606,471 616,499* 655,529* 677,566* 690,585 700,612* 719,645 727,646* 742,658*;
1036,516* 1058,513* 1080,500; 1036,516 976,506* 909,505* 884,506 833,535* 824,529 820,537 803,537* 795,537* 774,538 775,550 786,568*; 1036,516 1038,575* 1038,585* 1038,617 1055,633* 1057,675*; 1038,575 1008,583*`
  },
  {
    x: 1020,
    y: 500,
    d: `42,283* 55,290* 80,291* 98,293 110,310* 120,325 156,352* 165,362 168,380 174,392* 194,404* 218,420* 228,421* 247,421* 264,428* 273,434* 275,446* 282,460* 288,483* 297,493* 299,505* 300,517* 328,538* 338,543* 362,550* 374,548* 396,544* 432,538* 445,537* 460,536* 470,537* 478,540* 493,530* 505,518* 514,510* 527,498* 540,487* 555,470* 568,462* 575,455* 590,444* 605,428* 618,418* 630,407* 650,390* 673,372* 690,368* 703,369* 719,372*;
48,276*; 46,290*; 95,356* 133,382* 137,405 154,412* 165,411* 174,392; 154,412 140,417 118,442* 110,451 98,453* 76,457*; 218,420 242,323 229,317*; 218,412*;
247,421 254,395* 260,370* 267,340* 280,321* 283,290 276,285 276,280 281,278 285,246*; 267,325*; 272,342*; 267,340 283,336*; 257,418* 260,392* 264,360; 264,428 272,395 290,382* 307,370*; 273,434 288,441*; 278,445* 292,458*; 277,460* 285,462*; 299,500 305,485 307,457* 318,461* 330,456*; 310,468* 320,465* 330,468*; 299,495 315,480 320,466; 296,510* 295,527*;
328,538 324,548* 327,549*; 324,548 316,598* 310,618* 305,628* 290,641* 272,655 268,664 258,664* 245,661 230,665 188,685* 172,702 125,698 103,716* 99,742 86,749* 55,763*; 290,645*; 316,598 330,590 346,581*; 322,598* 308,594* 295,601*; 310,618 328,628* 335,645* 333,655* 338,668* 347,703*; 338,668 353,670*;
316,598 278,572 272,568* 247,580* 230,566 208,556* 193,560 203,575* 195,580 183,574*; 203,575 185,590 193,595*; 274,566 277,545 264,508*; 362,550 377,530* 388,490 391,471*; 374,548 381,530* 388,520*; 385,540* 401,519*; 396,540 399,535*; 391,535*;
567,98* 572,118* 600,124; 565,123* 573,123* 580,126*; 572,122 535,132 527,136* 532,155* 536,165* 545,175 548,187* 552,198* 555,215* 562,232* 567,241* 575,250* 583,265* 592,279* 600,292* 605,303* 612,315* 618,325* 625,338* 632,348* 640,354* 655,357* 665,364* 673,372;
532,153 510,155 490,164 481,160* 465,156 445,167* 430,177 427,187 418,186* 413,208* 410,230* 418,254* 452,277* 470,274 486,277*; 452,272* 458,244*; 548,155* 565,184*; 548,187 560,178* 566,182*; 557,167*; 567,241 555,252 522,271* 500,302* 484,307*; 530,269* 498,297* 493,303*;
567,241 580,223*; 572,235*; 583,265 594,253*; 578,268* 560,280 536,304*; 592,282 612,265*; 592,282 570,300 550,317*; 600,290 624,277*; 605,303 616,300*; 618,325 603,325*; 575,263* 545,290* 540,299*; 560,284* 573,300*; 565,289* 572,294*; 555,294*; 564,296*; 610,322* 628,320*; 600,327* 606,325*; 585,272*; 604,287*; 547,319* 560,330*;
510,345* 513,349* 530,340* 550,332* 565,342* 582,350* 600,352* 620,355* 632,350; 555,333* 550,340*; 570,339*; 617,357 612,362* 604,376*; 617,357 615,385* 620,395* 630,407; 622,361* 632,352* 643,364*; 608,352* 625,350*;
630,407 648,425 649,446* 642,451*; 630,407 620,411* 600,405* 590,405* 570,403*; 605,410* 575,412 550,426*; 571,405* 565,416*; 605,428 590,432* 565,417 553,417*; 590,444 575,434* 565,431 545,428* 537,425*; 575,455 565,440 550,430*; 590,436* 578,436*; 590,444 597,450*; 570,462 585,466* 597,470*; 575,465 586,475*; 570,455* 574,450* 582,447*;
361,416* 384,415* 408,403 427,402* 458,421* 464,423* 478,430* 512,435* 530,438* 545,458* 555,470; 458,421 453,438*; 478,430 475,443* 477,455* 478,468* 475,480*; 465,458* 462,475* 466,479* 456,478*; 460,485 450,500* 442,507* 440,525* 436,537; 456,490 452,505* 455,535; 463,490* 450,515* 445,535; 475,475 473,495* 465,505; 512,435 506,458*;
512,470* 516,495* 517,510* 512,530* 517,547*; 523,475* 520,495* 514,510; 508,470* 510,485* 508,505* 508,518*; 508,537* 514,510; 483,512* 476,518* 468,535* 473,545* 486,557*; 470,512* 478,528* 484,545*; 465,518* 472,530 475,551*; 493,532*; 474,545 475,580 460,576 445,562* 435,556 424,558*;
540,487 575,532* 587,511*; 575,532 570,543* 555,565 534,580* 522,592 520,602 508,615 506,637*`
  }
]

const paths = []
const nodes = []
for (const s of sections) {
  for (const branch of s.d.split(';')) {
    const pts = branch.trim().split(/\s+/).map((p) => {
      const [x, y] = p.replace('*', '').split(',').map(Number)
      const pt = [+(s.x + x / 3).toFixed(1), +(s.y + y / 3).toFixed(1)]
      if (p.endsWith('*')) nodes.push(pt)
      return pt.join(' ')
    })
    if (pts.length > 1) paths.push('M' + pts.join('L'))
  }
}
const feeder = paths.join('')
const nodePath = nodes.map(([x, y]) => `M${x} ${y}h0`).join('')
</script>

<template>
  <div class="app">
    <header class="titlebar">
      <svg class="icon" viewBox="0 0 16 16" v-html="icons.app"></svg>
      <h1>Elipse Power Studio (64-bit) - [PowerConfiguration]</h1>
      <button class="winbtn" aria-label="Minimize"><svg viewBox="0 0 12 12"><path d="M1 6.500h10" /></svg></button>
      <button class="winbtn" aria-label="Restore"><svg viewBox="0 0 12 12"><path d="M1.500 3.500h7v7h-7zM3.500 3.500v-2h7v7h-2" /></svg></button>
      <button class="winbtn" aria-label="Close"><svg viewBox="0 0 12 12"><path d="M1 1l10 10M11 1L1 11" /></svg></button>
    </header>

    <nav class="menubar">
      <span class="grip"></span>
      <button v-for="m in menus" :key="m" class="menu"><u v-if="m !== 'Help'">{{ m[0] }}</u><template v-else>H</template>{{ m.slice(1) }}</button>
    </nav>

    <div class="barrow">
      <div v-for="(bar, b) in topBars" :key="b" class="bar">
        <span class="grip"></span>
        <template v-for="(t, i) in bar" :key="i">
          <span v-if="t.sep" class="sep"></span>
          <button v-else class="tool" :class="{ on: t.on, drop: t.drop }" :aria-label="t.icon">
            <svg class="icon" viewBox="0 0 16 16" v-html="icons[t.icon]"></svg>
            <i v-if="t.drop" class="arrow" :class="{ dim: b === 1 && i < 3 }"></i>
          </button>
        </template>
        <template v-if="b === 2">
          <button class="textbtn">Zoom<i class="arrow"></i></button>
          <span class="sep"></span>
          <button class="textbtn off">Layers<i class="arrow dim"></i></button>
        </template>
      </div>
    </div>

    <div class="barrow">
      <div v-for="(bar, b) in formatBars" :key="b" class="bar">
        <span class="grip"></span>
        <template v-for="(t, i) in bar" :key="i">
          <span v-if="t.sep" class="sep"></span>
          <button v-else class="tool" :class="{ drop: t.drop }" :aria-label="t.icon">
            <svg class="icon" viewBox="0 0 16 16" v-html="icons[t.icon]"></svg>
            <i v-if="t.drop" class="arrow dim"></i>
          </button>
        </template>
      </div>
      <div class="bar">
        <span class="grip"></span>
        <select class="combo font" aria-label="Font" disabled></select>
        <select class="combo size" aria-label="Font size" disabled></select>
        <template v-for="(t, i) in fontBar" :key="i">
          <span v-if="t.sep" class="sep"></span>
          <button v-else class="tool" :class="{ drop: t.drop }" :aria-label="t.icon">
            <svg class="icon" viewBox="0 0 16 16" v-html="icons[t.icon]"></svg>
            <i v-if="t.drop" class="arrow dim"></i>
          </button>
        </template>
      </div>
    </div>

    <div class="work">
      <aside class="dock">
        <section class="pane organizer">
          <div class="panehead">
            <h2>Organizer</h2>
            <button aria-label="Menu"><svg viewBox="0 0 10 10"><path d="M0 3h10L5 8z" fill="#fff" stroke="none" /></svg></button>
            <button aria-label="Pin"><svg viewBox="0 0 10 10"><path d="M3.500 5.500v-5h3v5M1.500 5.500h7M5 6v4" /></svg></button>
            <button aria-label="Close"><svg viewBox="0 0 10 10"><path d="M1 1l8 8M9 1L1 9" /></svg></button>
          </div>
          <div class="treebox">
            <ul class="tree">
              <li v-for="row in tree" :key="row.label">
                <span v-for="(g, k) in row.guides" :key="k" class="cell" :class="{ line: g }"></span>
                <span class="cell own" :class="{ up: row.up, down: row.down }">
                  <button v-if="row.box" class="expander" :class="{ plus: row.box === '+' }" :aria-label="'Toggle ' + row.label"></button>
                </span>
                <svg class="icon" viewBox="0 0 16 16" v-html="icons[row.icon]"></svg>
                <button class="node" :class="{ selected: row.label === selectedNode }" @click="selectedNode = row.label">{{ row.label }}</button>
              </li>
            </ul>
            <div class="scroll flat">
              <button aria-label="Scroll up"><svg viewBox="0 0 10 10"><path d="M1.500 7L5 3.500 8.500 7" /></svg></button>
              <span class="thumb"></span>
              <button aria-label="Scroll down"><svg viewBox="0 0 10 10"><path d="M1.500 3L5 6.500 8.500 3" /></svg></button>
            </div>
          </div>
          <div class="docktabs">
            <button class="docktab active"><svg class="icon" viewBox="0 0 16 16" v-html="icons.organizer"></svg>Organizer</button>
            <button class="docktab"><svg class="icon" viewBox="0 0 16 16" v-html="icons.gallery"></svg>Gallery</button>
          </div>
        </section>

        <section class="pane properties">
          <div class="panehead">
            <h2>'JRL-B1_JRL03' (Power.EDBFEEDER) - Properties</h2>
            <button aria-label="Menu"><svg viewBox="0 0 10 10"><path d="M0 3h10L5 8z" fill="#fff" stroke="none" /></svg></button>
            <button aria-label="Pin"><svg viewBox="0 0 10 10"><path d="M3.500 5.500v-5h3v5M1.500 5.500h7M5 6v4" /></svg></button>
            <button aria-label="Close"><svg viewBox="0 0 10 10"><path d="M1 1l8 8M9 1L1 9" /></svg></button>
          </div>
          <div class="propbar">
            <div class="proptools">
              <button class="tool on" aria-label="Categorized"><svg class="icon" viewBox="0 0 16 16" v-html="icons.categorized"></svg></button>
              <button class="tool" aria-label="Sort"><svg class="icon" viewBox="0 0 16 16" v-html="icons.sortaz"></svg></button>
            </div>
            <label class="find">
              <input type="text" placeholder="Find" aria-label="Find property" />
              <svg class="icon" viewBox="0 0 16 16" v-html="icons.search"></svg>
            </label>
          </div>
          <div class="prophead"><span>Property</span><span>Value</span></div>
          <div class="propbody">
            <table class="grid">
              <tbody v-for="g in groups" :key="g.name">
                <tr class="group">
                  <th class="gutter"><button class="fold" :aria-label="'Collapse ' + g.name"></button></th>
                  <th colspan="4">{{ g.name }}</th>
                </tr>
                <tr v-for="r in g.rows" :key="r.name" :class="{ selected: r.name === selectedProp }" @click="selectedProp = r.name">
                  <td class="gutter"></td>
                  <td class="type"><svg class="icon" viewBox="0 0 16 16" v-html="icons[r.icon]"></svg></td>
                  <td class="name">{{ r.name }}</td>
                  <td class="link"><svg viewBox="0 0 9 9"><path d="M.5.500h8v8h-8z" fill="#fff" stroke="#555" /><path d="M8 5v3H5z" fill="#777" /></svg></td>
                  <td class="value">
                    <div>
                      <span v-if="r.swatch" class="swatch" :style="{ background: r.swatch }"></span>
                      <span class="val">{{ r.value }}</span>
                      <button v-if="r.more" class="more" :aria-label="'Edit ' + r.name">...</button>
                    </div>
                  </td>
                </tr>
              </tbody>
            </table>
            <div class="scroll raised">
              <button aria-label="Scroll up"><svg viewBox="0 0 10 10"><path d="M1 7h8L5 3z" fill="#000" stroke="none" /></svg></button>
              <span class="thumb"></span>
              <button aria-label="Scroll down"><svg viewBox="0 0 10 10"><path d="M1 3h8L5 7z" fill="#000" stroke="none" /></svg></button>
            </div>
          </div>
          <div class="hint">{{ selectedProp }}</div>
        </section>
      </aside>

      <main class="editor">
        <div class="doctabs">
          <div class="doctab">
            <svg class="icon" viewBox="0 0 16 16" v-html="icons.powerconf"></svg>
            <span>PowerConfiguration</span>
            <button aria-label="Close tab"><svg viewBox="0 0 10 10"><path d="M1 1l8 8M9 1L1 9" /></svg></button>
          </div>
          <div class="docnav">
            <button aria-label="Previous tab"><svg viewBox="0 0 10 10"><path d="M7.500 1v8l-4-4z" /></svg></button>
            <button aria-label="Next tab"><svg viewBox="0 0 10 10"><path d="M2.500 1v8l4-4z" /></svg></button>
          </div>
        </div>

        <div class="barrow editorbars">
          <div v-for="(bar, b) in editorBars" :key="b" class="bar">
            <span class="grip"></span>
            <template v-for="(t, i) in bar" :key="i">
              <span v-if="t.sep" class="sep"></span>
              <button v-else class="tool" :class="{ on: t.on }" :aria-label="t.icon">
                <svg class="icon" viewBox="0 0 16 16" v-html="icons[t.icon]"></svg>
              </button>
            </template>
          </div>
        </div>

        <div class="canvas">
          <svg class="sheet" viewBox="574 151 748 666">
            <defs>
              <linearGradient id="sheetFill" x2="0" y2="1">
                <stop offset="0" stop-color="#000" />
                <stop offset="1" stop-color="#4b4b4b" />
              </linearGradient>
            </defs>
            <rect x="574" y="151" width="748" height="666" fill="url(#sheetFill)" />
            <path class="wire" :d="feeder" />
            <path class="joint" :d="nodePath" />
          </svg>
          <div class="strip">JRL-B1_JRL03</div>
          <div class="strip foot">X:678336,939 Y:7057077,794</div>
          <div class="overview">
            <div class="map">
              <button class="mapclose" aria-label="Close overview"><svg viewBox="0 0 10 10"><path d="M1 1l8 8M9 1L1 9" /></svg></button>
              <div class="mapframe">
                <svg viewBox="574 151 748 666">
                  <rect x="574" y="151" width="748" height="666" fill="url(#sheetFill)" />
                  <path class="wire" :d="feeder" />
                  <path class="joint" :d="nodePath" />
                </svg>
              </div>
            </div>
            <div class="zoomer">
              <button aria-label="Zoom in"><svg class="icon" viewBox="0 0 16 16" v-html="icons.zoomin"></svg></button>
              <input v-model="zoom" type="range" min="0" max="100" aria-label="Zoom" />
              <button aria-label="Zoom out"><svg class="icon" viewBox="0 0 16 16" v-html="icons.zoomout"></svg></button>
            </div>
          </div>
        </div>

        <div class="sheets">
          <div class="sheetnav">
            <button aria-label="First"><svg viewBox="0 0 10 10"><path d="M2 1v8M7 1.500v7L4 5z" /></svg></button>
            <button aria-label="Previous"><svg viewBox="0 0 10 10"><path d="M7 1.500v7L4 5z" /></svg></button>
            <button aria-label="Next"><svg viewBox="0 0 10 10"><path d="M3 1.500v7L6 5z" /></svg></button>
            <button aria-label="Last"><svg viewBox="0 0 10 10"><path d="M8 1v8M3 1.500v7L6 5z" /></svg></button>
          </div>
          <button
            v-for="[name, width] in sheets"
            :key="name"
            class="sheettab"
            :class="{ active: name === activeSheet }"
            :style="{ width: width + 'px' }"
            @click="activeSheet = name"
          ><span>{{ name }}</span></button>
        </div>
      </main>
    </div>

    <footer class="status">
      <span class="help">For Help, press F1</span>
      <span class="field pos"><svg class="icon" viewBox="0 0 16 16" v-html="icons.pos"></svg>0, 0</span>
      <span class="field dim"><svg class="icon" viewBox="0 0 16 16" v-html="icons.size"></svg>42333,22146</span>
      <span class="field keys"><span class="off">CAP</span><span>NUM</span><span class="off">SCRL</span></span>
    </footer>
    <svg class="pointer" viewBox="0 0 12 16"><path d="M1 1v12l3-3 2 5 2-1-2-5h4z" fill="#222" stroke="#fff" stroke-width=".5" /></svg>
  </div>
</template>

<style>
html,
body,
#app {
  height: 100%;
}
</style>

<style scoped>
.app {
  position: relative;
  display: flex;
  flex-direction: column;
  height: 100%;
  overflow: hidden;
  background: #f0f0f0;
  color: #000;
  font: 11px/16px "DejaVu Sans Condensed", Tahoma, "Noto Sans", sans-serif;
}

button {
  flex: none;
  display: flex;
  align-items: center;
  justify-content: center;
  padding: 0;
  border: 0;
  background: none;
  color: inherit;
  font: inherit;
}

button svg {
  width: 10px;
  height: 10px;
  fill: none;
  stroke: #fff;
}

svg.icon {
  flex: none;
  width: 16px;
  height: 16px;
  stroke: none;
}

h1,
h2 {
  margin: 0;
  font: inherit;
}

.titlebar {
  flex: none;
  display: flex;
  align-items: center;
  height: 23px;
  padding-left: 2px;
  background: #fff;
}

.titlebar h1 {
  flex: 1;
  padding-left: 5px;
  font: 12px/16px Roboto, "Noto Sans", sans-serif;
}

.winbtn {
  width: 46px;
  height: 22px;
}

.winbtn svg {
  width: 12px;
  height: 12px;
  stroke: #000;
}

.menubar {
  flex: none;
  display: flex;
  align-items: center;
  height: 24px;
  background: linear-gradient(90deg, #d9d9d9, #e4e4e4);
}

.menu {
  padding: 0 7px;
}

.off {
  color: #8a8a8a;
}

.grip {
  flex: none;
  align-self: center;
  width: 3px;
  height: 15px;
  margin: 0 3px 0 4px;
  background: repeating-linear-gradient(#999 0 2px, transparent 2px 5px);
}

.barrow {
  flex: none;
  display: flex;
  gap: 1px;
  height: 26px;
  background: linear-gradient(90deg, #dcdcdc, #e3e3e3);
}

.bar {
  display: flex;
  align-items: center;
  height: 26px;
  padding-right: 1px;
  border-bottom: 1px solid #a0a0a0;
  border-radius: 3px;
  box-sizing: border-box;
  background: linear-gradient(#fff, #f4f4f4 40%, #bcbcbc);
}

.tool {
  width: 22px;
  height: 22px;
  box-sizing: border-box;
}

.tool.on {
  border: 1px solid #3399ff;
  background: #d6e8f8;
}

.tool.drop {
  justify-content: flex-start;
  gap: 6px;
  width: 35px;
  padding-left: 3px;
}

.arrow {
  flex: none;
  border: 3px solid transparent;
  border-top-color: #000;
  border-bottom: 0;
}

.arrow.dim {
  border-top-color: #777;
}

.sep {
  flex: none;
  width: 8px;
  height: 16px;
  background: linear-gradient(#b8b8b8, #b8b8b8) 4px 0 / 1px 100% no-repeat;
}

.textbtn {
  gap: 7px;
  padding: 0 3px 0 4px;
}

.combo {
  height: 20px;
  margin-right: 5px;
  border: 1px solid #999;
  border-radius: 0;
  appearance: none;
  background-color: #eee;
  background-image: linear-gradient(to bottom left, #777 50%, transparent 50%), linear-gradient(to bottom right, #777 50%, transparent 50%);
  background-position: right 7px center, right 4px center;
  background-size: 3px 3px;
  background-repeat: no-repeat;
}

.combo.font {
  width: 236px;
  margin-left: 2px;
}

.combo.size {
  width: 55px;
}

.work {
  flex: 1;
  display: flex;
  min-height: 0;
}

.dock {
  flex: none;
  display: flex;
  flex-direction: column;
  gap: 6px;
  width: 292px;
  padding: 1px 3px 0 0;
  border-right: 1px solid #aaa;
}

.panehead {
  flex: none;
  display: flex;
  align-items: center;
  gap: 7px;
  height: 16px;
  padding: 0 4px 0 3px;
  border: 1px solid #a8a8a8;
  box-sizing: border-box;
  background: #b9b9b9;
  color: #fff;
}

.panehead h2 {
  flex: 1;
  white-space: nowrap;
}

.treebox {
  display: flex;
  height: 320px;
  margin: 5px 6px 4px 4px;
  border: 1px solid #777;
  border-color: #777 #ddd #ddd #777;
  box-sizing: border-box;
  overflow: hidden;
  background: #fff;
}

.tree {
  flex: 1;
  margin: 0;
  padding: 2px 0 0;
  list-style: none;
}

.tree li {
  display: flex;
  align-items: center;
  height: 16px;
}

.cell {
  flex: none;
  position: relative;
  display: flex;
  align-items: center;
  justify-content: center;
  width: 19px;
  height: 16px;
}

.cell.line {
  background: repeating-linear-gradient(#888 0 1px, #fff 1px 2px) 9px 0 / 1px 100% no-repeat;
}

.own {
  background: repeating-linear-gradient(90deg, #888 0 1px, #fff 1px 2px) 9px 8px / 10px 1px no-repeat;
}

.own.up {
  background: repeating-linear-gradient(90deg, #888 0 1px, #fff 1px 2px) 9px 8px / 10px 1px no-repeat, repeating-linear-gradient(#888 0 1px, #fff 1px 2px) 9px 0 / 1px 8px no-repeat;
}

.own.down {
  background: repeating-linear-gradient(90deg, #888 0 1px, #fff 1px 2px) 9px 8px / 10px 1px no-repeat, repeating-linear-gradient(#888 0 1px, #fff 1px 2px) 9px 0 / 1px 16px no-repeat;
}

.expander {
  width: 9px;
  height: 9px;
  border: 1px solid #777;
  box-sizing: border-box;
  background: linear-gradient(#000, #000) center / 5px 1px no-repeat, #fff;
}

.expander.plus {
  background: linear-gradient(#000, #000) center / 5px 1px no-repeat, linear-gradient(#000, #000) center / 1px 5px no-repeat, #fff;
}

.node {
  height: 16px;
  margin-left: 3px;
  padding: 0 2px;
  white-space: nowrap;
}

.node.selected {
  background: #efefef;
}

.scroll {
  flex: none;
  display: flex;
  flex-direction: column;
  width: 17px;
}

.scroll button {
  width: 100%;
  height: 17px;
}

.flat {
  width: 15px;
  background: #f0f0f0;
}

.flat svg {
  stroke: #444;
  stroke-width: 2;
}

.flat .thumb {
  flex: 1;
  margin-bottom: 14px;
  background: #cdcdcd;
}

.docktabs {
  display: flex;
  height: 22px;
  padding-left: 2px;
  border-top: 1px solid #888;
}

.docktab {
  gap: 2px;
  padding: 0 5px 0 3px;
  color: #777;
}

.docktab.active {
  border-right: 1px solid #888;
  background: #fff;
  color: #000;
}

.properties {
  flex: 1;
  display: flex;
  flex-direction: column;
  min-height: 0;
}

.propbar {
  flex: none;
  display: flex;
  align-items: center;
  gap: 5px;
  height: 31px;
  padding: 0 4px;
}

.proptools {
  display: flex;
  padding: 1px 2px;
  background: linear-gradient(#fff, #c4c4c4);
}

.find {
  flex: 1;
  display: flex;
  align-items: center;
  height: 22px;
  padding-right: 4px;
  border: 1px solid #999;
  box-sizing: border-box;
  background: #fff;
}

.find input {
  flex: 1;
  min-width: 0;
  padding: 0 4px;
  border: 0;
  outline: 0;
  background: none;
  font: inherit;
}

.find input::placeholder {
  color: #666;
}

.prophead {
  flex: none;
  display: flex;
  align-items: center;
  height: 21px;
  background: #fff;
}

.prophead span {
  width: 143px;
  padding-left: 4px;
  line-height: 21px;
}

.prophead span + span {
  width: auto;
  padding-left: 5px;
  border-left: 1px solid #ddd;
}

.propbody {
  flex: none;
  display: flex;
  height: 272px;
  overflow: hidden;
}

.grid {
  flex: 1;
  height: 272px;
  border-collapse: collapse;
  table-layout: fixed;
}

.grid tr {
  height: 17px;
}

.grid td {
  height: 16px;
  padding: 0;
  border-bottom: 1px solid #f0f0f0;
  background: #fff;
  white-space: nowrap;
}

.grid th {
  padding: 0 0 0 4px;
  color: #777;
  font-weight: bold;
  font-size: 12px;
  line-height: 16px;
  text-align: left;
}

.grid .gutter {
  width: 17px;
  padding: 0;
  background: #f0f0f0;
}

.fold {
  width: 9px;
  height: 9px;
  margin-left: 4px;
  border: 1px solid #888;
  box-sizing: border-box;
  background: linear-gradient(#446, #446) center / 5px 1px no-repeat;
}

.grid td.type {
  width: 16px;
}

.type svg {
  display: block;
}

.grid td.name {
  width: 97px;
  padding-left: 3px;
}

.grid td.link {
  width: 15px;
}

.link svg {
  display: block;
  width: 9px;
  height: 9px;
  margin-left: 1px;
}

.grid td.value {
  border-left: 2px solid #f0f0f0;
}

.value div {
  display: flex;
  align-items: center;
  gap: 3px;
  height: 16px;
  padding: 0 2px 0 1px;
}

.val {
  padding-left: 2px;
}

.selected .type,
.selected .name,
.selected .link {
  background: #c2e0ff;
}

.swatch {
  width: 12px;
  height: 12px;
  border: 1px solid #555;
}

.more {
  align-items: flex-start;
  width: 15px;
  height: 14px;
  margin-left: auto;
  border: 1px solid #aaa;
  box-sizing: border-box;
  background: #e1e1e1;
  line-height: 12px;
}

.raised {
  background: #f6f6f6;
}

.raised button,
.raised .thumb {
  border: 1px solid;
  border-color: #fff #777 #777 #fff;
  box-sizing: border-box;
  background: #f0f0f0;
}

.raised .thumb {
  height: 143px;
  margin-bottom: auto;
}

.hint {
  height: 20px;
  margin-top: auto;
  padding-left: 3px;
  border: 1px solid #999;
  box-sizing: border-box;
  font-weight: bold;
  line-height: 18px;
}

.editor {
  flex: 1;
  display: flex;
  flex-direction: column;
  min-width: 0;
  margin-left: 2px;
  padding-right: 3px;
  border: 1px solid #a0a0a0;
  border-width: 1px 0 1px 1px;
}

.doctabs {
  flex: none;
  display: flex;
  align-items: flex-end;
  justify-content: space-between;
  height: 22px;
}

.doctab {
  display: flex;
  align-items: center;
  gap: 2px;
  height: 21px;
  padding: 0 6px 0 3px;
  border: 1px solid #999;
  border-width: 1px 1px 0 0;
  border-radius: 3px 3px 0 0;
  box-sizing: border-box;
  background: #fff;
  font-weight: bold;
}

.doctab button {
  margin-left: 9px;
}

.doctab button svg {
  stroke: #000;
  stroke-width: 1.5;
}

.docnav {
  display: flex;
  gap: 8px;
  padding: 0 3px 6px 0;
}

.docnav svg {
  stroke: #333;
}

.editorbars {
  height: 28px;
}

.editorbars .bar {
  height: 27px;
}

.canvas {
  flex: 1;
  position: relative;
  display: flex;
  justify-content: center;
  min-height: 0;
  padding-right: 2px;
  border-left: 1px solid #777;
  background: #f4f4f4;
}

.sheet {
  height: 100%;
  aspect-ratio: 748 / 666;
}

.wire {
  fill: none;
  stroke: #efb352;
  stroke-width: 1.25;
}

.joint {
  fill: none;
  stroke: #f4b654;
  stroke-width: 3.75;
  stroke-linecap: round;
}

.strip {
  position: absolute;
  top: 0;
  left: 0;
  right: 0;
  height: 17px;
  padding-left: 3px;
  background: rgba(127, 127, 127, 0.8);
  color: #fff;
  font: 11px/18px "Liberation Sans", Arial, sans-serif;
}

.strip.foot {
  top: auto;
  bottom: 0;
  height: 15px;
  line-height: 16px;
}

.overview {
  position: absolute;
  top: 24px;
  right: 8px;
  display: flex;
  gap: 7px;
}

.map,
.zoomer {
  display: flex;
  flex-direction: column;
  background: #9d9d9d;
}

.map {
  padding: 6px 6px 5px;
}

.mapclose {
  align-self: flex-end;
  height: 10px;
  margin-bottom: 6px;
}

.mapclose svg {
  stroke: #ddd;
  stroke-width: 2;
}

.mapframe {
  display: flex;
  justify-content: center;
  width: 184px;
  border: 1px solid #ccc;
  background: #808080;
}

.mapframe svg {
  width: 168px;
  height: 149px;
}

.mapframe .wire {
  stroke-width: 2.5;
  opacity: 0.7;
}

.mapframe .joint {
  stroke-width: 5;
  opacity: 0.35;
}

.zoomer {
  align-items: center;
  gap: 5px;
  width: 34px;
  padding: 6px 0;
  box-sizing: border-box;
}

.zoomer button {
  width: 22px;
  height: 22px;
  border: 1px solid #777;
  box-sizing: border-box;
  background: #f4f4f4;
}

.zoomer input {
  flex: 1;
  width: 22px;
  min-height: 0;
  margin: 0;
  appearance: none;
  background: linear-gradient(#d4d4d4, #d4d4d4) center / 4px 88% no-repeat;
  writing-mode: vertical-lr;
  direction: rtl;
}

.zoomer input::-webkit-slider-thumb {
  width: 22px;
  height: 10px;
  border: 1px solid #777;
  box-sizing: border-box;
  appearance: none;
  background: #f4f4f4;
}

.sheets {
  flex: none;
  display: flex;
  height: 19px;
  border-top: 1px solid #777;
}

.sheetnav {
  display: flex;
  align-items: center;
  gap: 7px;
  width: 70px;
}

.sheetnav svg {
  fill: #222;
  stroke: #222;
}

.sheettab {
  position: relative;
  height: 16px;
  font: 11px/16px "Liberation Sans", Arial, sans-serif;
  white-space: nowrap;
}

.sheettab span {
  position: relative;
  z-index: 1;
}

.sheettab::before,
.sheettab::after {
  content: "";
  position: absolute;
  top: 0;
  bottom: 0;
  border-bottom: 1px solid #777;
}

.sheettab::before {
  left: 2px;
  right: 50%;
  border-left: 1px solid #777;
  transform: skewX(22deg);
}

.sheettab::after {
  left: 50%;
  right: 0;
  border-right: 1px solid #777;
  transform: skewX(-22deg);
}

.sheettab.active {
  font-weight: bold;
}

.sheettab.active::before,
.sheettab.active::after {
  background: #fff;
}

.status {
  flex: none;
  display: flex;
  align-items: center;
  height: 22px;
  padding-top: 2px;
  box-sizing: border-box;
  background: #f0f0f0;
}

.help {
  flex: 1;
  padding-left: 3px;
}

.field {
  display: flex;
  align-items: center;
  gap: 3px;
  height: 18px;
  padding-left: 4px;
  border-left: 1px solid #d0d0d0;
  box-sizing: border-box;
}

.field.pos,
.field.dim {
  width: 145px;
}

.field.keys {
  gap: 6px;
  width: 87px;
  padding-left: 3px;
}

.pointer {
  position: absolute;
  left: 1084px;
  bottom: 2px;
  width: 12px;
  height: 16px;
}
</style>
